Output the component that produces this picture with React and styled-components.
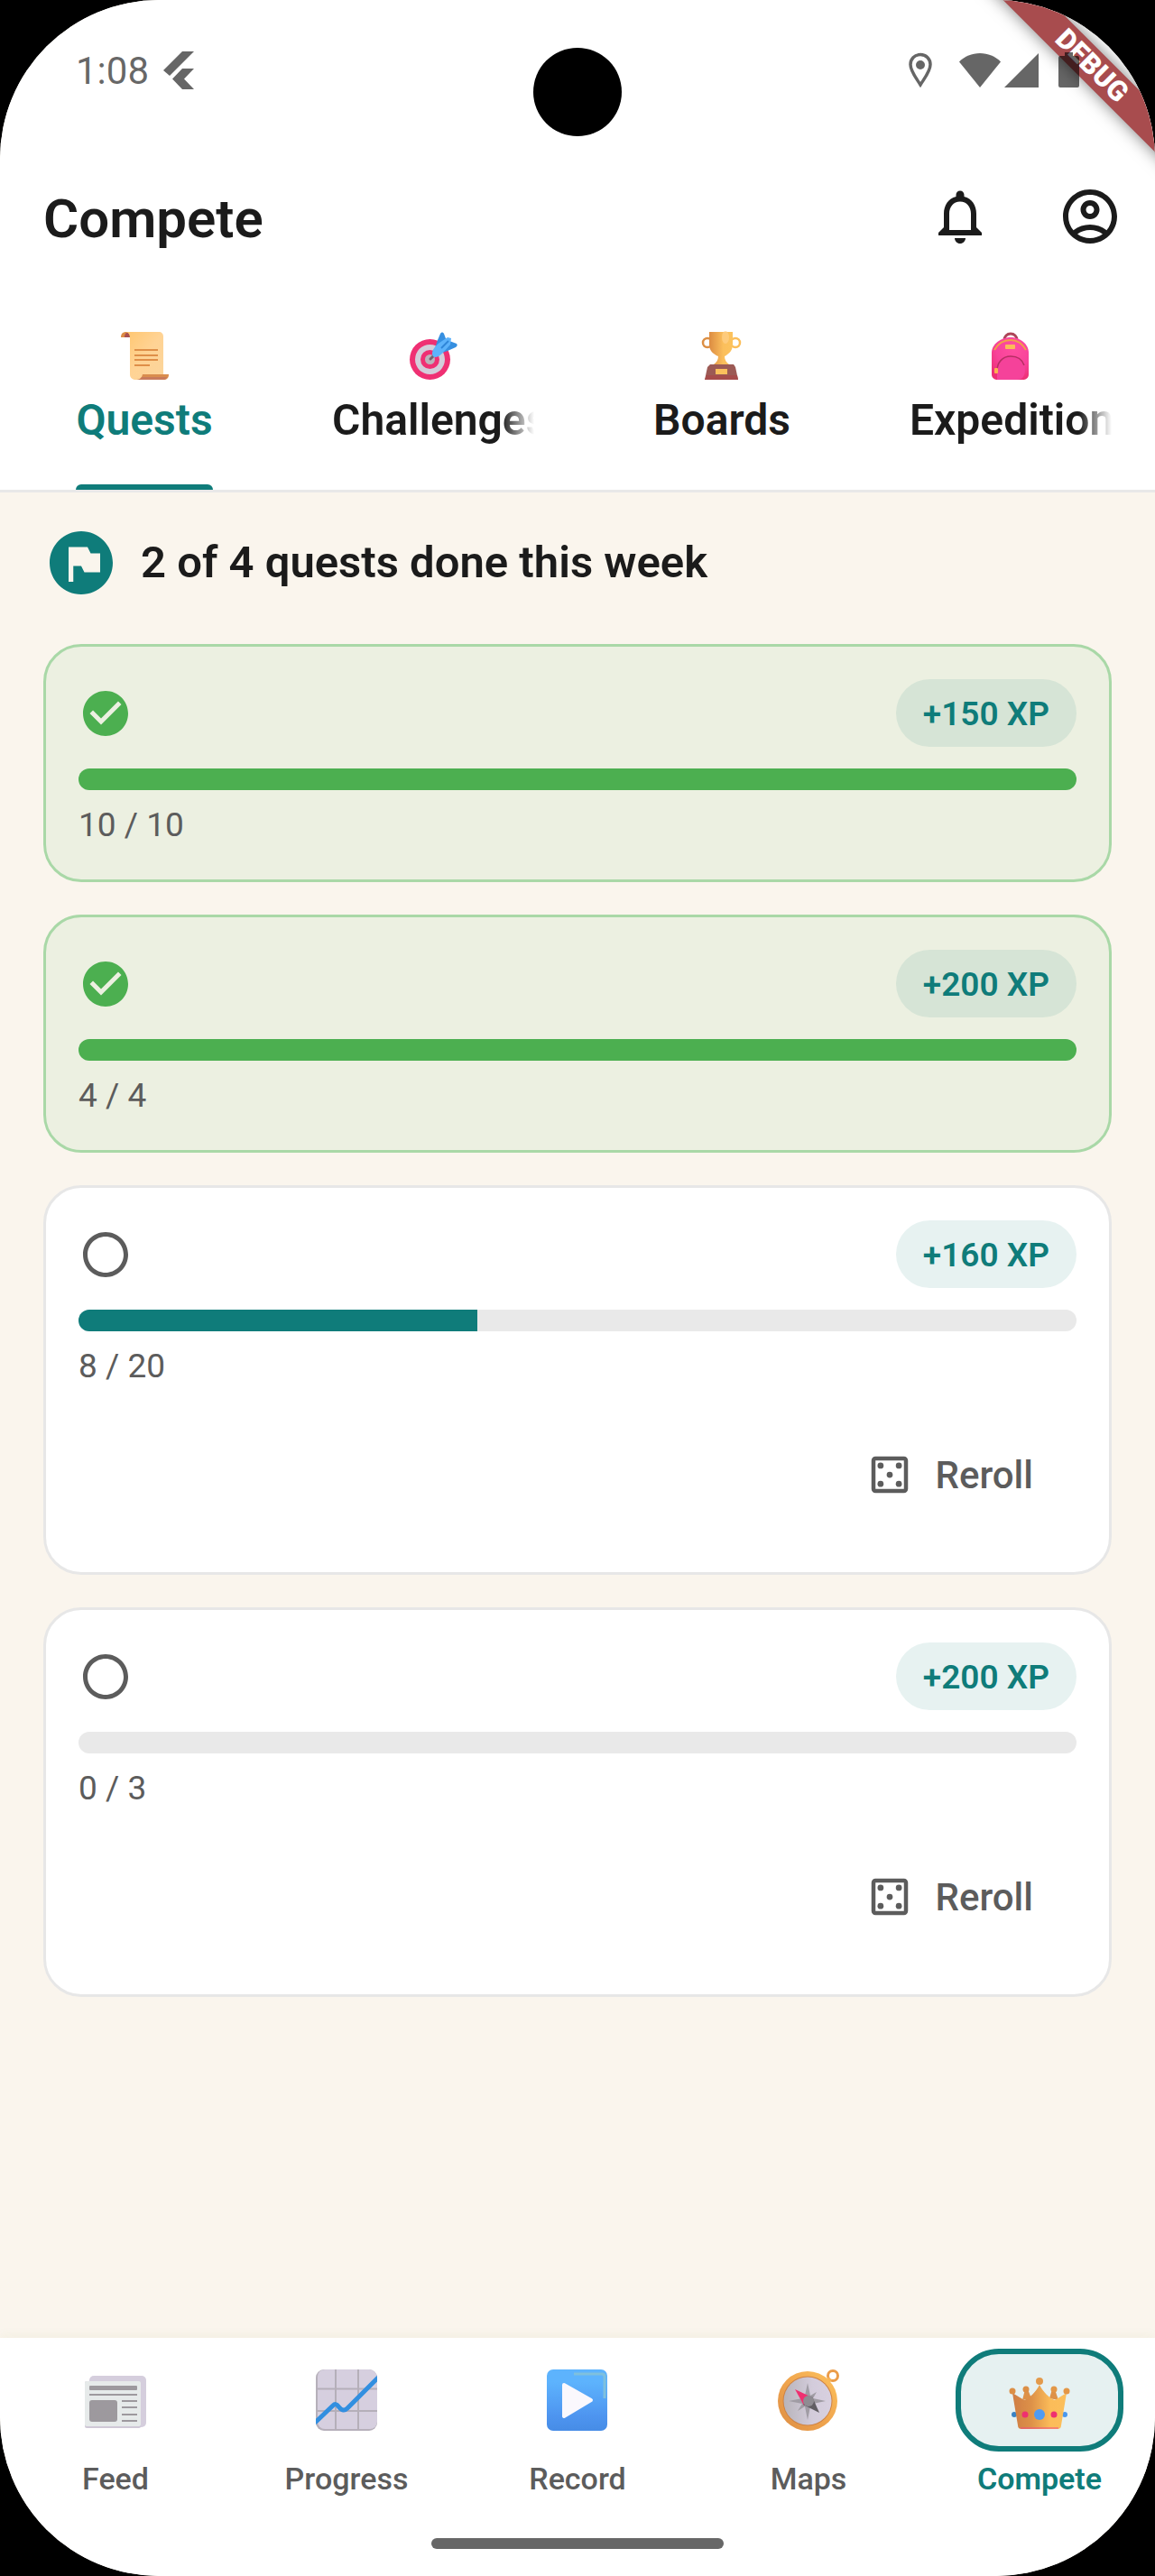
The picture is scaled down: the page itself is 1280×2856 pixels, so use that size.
import React from "react";
import styled, { createGlobalStyle, css } from "styled-components";
import {
  MdCheckCircle,
  MdFlagCircle,
  MdNotificationsNone,
  MdOutlineAccountCircle,
  MdOutlineCasino,
  MdOutlineCircle,
} from "react-icons/md";

const color = {
  teal: "#0f7c7a",
  tealSoft: "rgba(15, 124, 122, 0.1)",
  ink: "#1b1b1b",
  muted: "#5c5c5c",
  green: "#4caf50",
  cream: "#faf5ed",
  line: "#e8e8e8",
  system: "rgba(0, 0, 0, 0.6)",
};

const GlobalStyle = createGlobalStyle`
  *, *::before, *::after { box-sizing: border-box; }
  html, body { margin: 0; background: #000; }
  body { font-family: Roboto, "Noto Sans", sans-serif; color: ${color.ink}; }
  button { font: inherit; color: inherit; border: 0; padding: 0; background: none; cursor: pointer; }
  a { color: inherit; text-decoration: none; }
  h1, h2, p, ul { margin: 0; padding: 0; }
  svg { display: block; flex: none; }
`;

const Screen = styled.div`
  position: relative;
  display: flex;
  flex-direction: column;
  min-height: 100vh;
  overflow: hidden;
  border-radius: 176px;
  background: ${color.cream};
`;

/* ---------- system chrome ---------- */

const Camera = styled.div`
  position: absolute;
  z-index: 3;
  top: 53px;
  left: 50%;
  width: 98px;
  height: 98px;
  margin-left: -49px;
  border-radius: 50%;
  background: #000;
`;

const DebugBanner = styled.div`
  position: absolute;
  z-index: 1;
  top: 55px;
  right: -80px;
  width: 300px;
  height: 36px;
  transform: rotate(45deg);
  background: #a84c4e;
  box-shadow: 0 0 18px rgba(0, 0, 0, 0.5);
  color: #fff;
  font-size: 31px;
  line-height: 36px;
  font-weight: 900;
  text-align: center;
`;

const StatusBar = styled.div`
  position: relative;
  z-index: 2;
  display: flex;
  align-items: center;
  justify-content: space-between;
  height: 156px;
  padding: 0 84px;
  color: ${color.system};
  font-size: 42px;
`;

const StatusGroup = styled.div`
  display: flex;
  align-items: center;
  gap: ${(p) => p.$gap}px;
`;

/* ---------- header ---------- */

const Header = styled.header`
  background: #fff;
  border-bottom: 3px solid ${color.line};
`;

const AppBar = styled.div`
  display: flex;
  align-items: center;
  height: 168px;
  padding-left: 48px;
`;

const Title = styled.h1`
  flex: 1;
  padding-top: 6px;
  font-size: 60px;
  line-height: 72px;
  font-weight: 600;
`;

const IconButton = styled.button`
  display: grid;
  place-items: center;
  width: 144px;
  height: 144px;
  font-size: 72px;
`;

const Tabs = styled.div`
  display: grid;
  grid-template-columns: repeat(4, minmax(0, 1fr));
`;

const Tab = styled.button`
  display: flex;
  flex-direction: column;
  align-items: center;
  gap: 10px;
  height: 219px;
  padding: 43px 48px 0;
  color: ${(p) => (p.$active ? color.teal : color.ink)};
`;

const TabLabel = styled.span`
  display: flex;
  flex-direction: column;
  flex: 1;
  max-width: 100%;
  overflow: hidden;
  font-size: 48px;
  line-height: 70px;
  font-weight: 600;
  white-space: nowrap;
  ${(p) =>
    p.$fade &&
    css`
      mask-image: linear-gradient(to right, #000 calc(100% - 36px), transparent);
    `}
  ${(p) =>
    p.$active &&
    css`
      &::after {
        content: "";
        height: 6px;
        margin-top: auto;
        border-radius: 6px 6px 0 0;
        background: ${color.teal};
      }
    `}
`;

/* ---------- quests ---------- */

const Main = styled.main`
  flex: 1;
  padding: 36px 48px 48px;
`;

const Summary = styled.div`
  display: flex;
  align-items: center;
  gap: 24px;
  margin-bottom: 48px;

  svg {
    font-size: 84px;
    color: ${color.teal};
  }
`;

const SummaryText = styled.h2`
  font-size: 49px;
  line-height: 72px;
  font-weight: 600;
`;

const QuestList = styled.ul`
  display: flex;
  flex-direction: column;
  gap: 36px;
  list-style: none;
`;

const QuestCard = styled.li`
  display: flex;
  flex-direction: column;
  padding: 36px;
  border: 3px solid ${(p) => (p.$done ? "#a9d8a7" : "#e7e7e7")};
  border-radius: 42px;
  background: ${(p) => (p.$done ? "#ecf0e1" : "#fff")};
`;

const QuestTop = styled.div`
  display: flex;
  align-items: center;
  justify-content: space-between;
  font-size: 60px;
  color: ${(p) => (p.$done ? color.green : color.muted)};
`;

const XpPill = styled.span`
  padding: 13px 30px 11px;
  border-radius: 38px;
  background: ${color.tealSoft};
  color: ${color.teal};
  font-size: 37px;
  line-height: 51px;
  font-weight: 600;
`;

const Track = styled.div`
  height: 24px;
  margin: 24px 0 15px;
  overflow: hidden;
  border-radius: 12px;
  background: #e9e9e9;
`;

const Fill = styled.div`
  height: 100%;
  background: ${(p) => (p.$done ? color.green : color.teal)};
`;

const Count = styled.p`
  color: ${color.muted};
  font-size: 37px;
  line-height: 48px;
`;

const RerollButton = styled.button`
  display: flex;
  align-items: center;
  align-self: flex-end;
  gap: 24px;
  height: 144px;
  margin-top: 24px;
  padding: 0 48px 0 36px;
  color: ${color.muted};
  font-size: 42px;
  font-weight: 500;

  svg {
    font-size: 54px;
  }
`;

/* ---------- bottom navigation ---------- */

const BottomBar = styled.div`
  display: flex;
  flex-direction: column;
  align-items: center;
  padding-bottom: 30px;
  background: #fff;
  box-shadow: 0 -2px 12px rgba(120, 140, 40, 0.06);
`;

const Nav = styled.nav`
  display: grid;
  grid-template-columns: repeat(5, minmax(0, 1fr));
  width: 100%;
  padding: 12px 0 42px;
`;

const NavItem = styled.a`
  display: flex;
  flex-direction: column;
  align-items: center;
  gap: 6px;
  color: ${(p) => (p.$active ? color.teal : color.muted)};
  font-size: 34px;
  line-height: 48px;
  font-weight: ${(p) => (p.$active ? 600 : 500)};
`;

const NavIcon = styled.span`
  display: grid;
  place-items: center;
  width: 186px;
  height: 114px;
  border: 6px solid ${(p) => (p.$active ? color.teal : "transparent")};
  border-radius: 48px;
  background: ${(p) => (p.$active ? "#e6f1f1" : "transparent")};
`;

const GestureBar = styled.div`
  width: 324px;
  height: 12px;
  border-radius: 6px;
  background: #676767;
`;

/* ---------- drawings ---------- */

const FlutterMark = () => (
  <svg width="34" height="42" viewBox="0 0 34 42" fill="currentColor" aria-hidden="true">
    <path d="M21 0h13L7 27 0 21z" />
    <path d="M21 19h13L23 30.500 34 42H21L10 30.500z" />
  </svg>
);

const PinMark = () => (
  <svg width="42" height="40" viewBox="0 0 42 40" aria-hidden="true">
    <path
      d="M21 2.500c-6.500 0-11 4.800-11 11 0 7.500 6 14.500 11 22.500 5-8 11-15 11-22.500 0-6.200-4.500-11-11-11z"
      fill="none"
      stroke="currentColor"
      strokeWidth="3.500"
    />
    <circle cx="21" cy="14" r="5" fill="currentColor" />
  </svg>
);

const WifiMark = () => (
  <svg width="46" height="38" viewBox="0 0 46 38" fill="currentColor" aria-hidden="true">
    <path d="M0 9.500C6 3.500 14 0 23 0s17 3.500 23 9.500L23 38z" />
  </svg>
);

const SignalMark = () => (
  <svg width="38" height="38" viewBox="0 0 38 38" fill="currentColor" aria-hidden="true">
    <path d="M38 0v38H0z" />
  </svg>
);

const BatteryMark = () => (
  <svg width="23" height="40" viewBox="0 0 23 40" fill="currentColor" aria-hidden="true">
    <path d="M7 0h9v4h5a2 2 0 0 1 2 2v31a2 2 0 0 1-2 2H2a2 2 0 0 1-2-2V6a2 2 0 0 1 2-2h5z" />
  </svg>
);

const ScrollEmoji = () => (
  <svg width="54" height="54" viewBox="0 0 54 54" aria-hidden="true">
    <defs>
      <linearGradient id="paper" x1="0" y1="0" x2="1" y2="1">
        <stop offset="0" stopColor="#ffc670" />
        <stop offset=".5" stopColor="#ffd394" />
        <stop offset="1" stopColor="#fbd59c" />
      </linearGradient>
    </defs>
    <path d="M1 7c0-4 2-6 6-6h5v6z" fill="#dc8c46" />
    <path d="M5 7c0-3 1-5 3-5s3 2 3 5z" fill="#a94f4f" />
    <path d="M6 1h37c3 0 5 2 5 5v44l-6 4H18c-4 0-7-2-7-6V7c0-3-2-6-5-6z" fill="url(#paper)" />
    <path d="M25 48h29c0 4-2 6-6 6H18c4 0 6-2 7-6z" fill="#d98d4e" />
    <path d="M24 51h28c-1 2-2 3-4 3H18c3 0 5-1 6-3z" fill="#c97b5c" />
    <path d="M16 21h26M16 27h26M16 32h26M16 38h17" stroke="#df8f48" strokeWidth="2" />
  </svg>
);

const TargetEmoji = () => (
  <svg width="54" height="54" viewBox="0 0 54 54" aria-hidden="true">
    <circle cx="23.500" cy="31.500" r="22.500" fill="#ef3073" />
    <circle cx="23.500" cy="31.500" r="16.500" fill="#d3cdda" />
    <circle cx="23.500" cy="31.500" r="10.500" fill="#ef3073" />
    <circle cx="23.500" cy="31.500" r="5.500" fill="#b9b4bb" />
    <path d="M24 31l6-6" stroke="#75606c" strokeWidth="3" strokeLinecap="round" />
    <path d="M28 22l4-12 3-7c1-2 3-2 4 0l3 8-6 13z" fill="#368fe0" />
    <path d="M31 26l12-4 9-4c2-1 2-3 1-4l-8-3-9 4z" fill="#368fe0" />
    <path d="M26 25c0-4 3-8 8-12l9-6 4 1-1 7-8 9c-3 3-6 5-9 5-2 0-3-2-3-4z" fill="#5db3fb" />
    <path d="M36 19l8-8" stroke="#2f86d8" strokeWidth="2" />
  </svg>
);

const TrophyEmoji = () => (
  <svg width="54" height="54" viewBox="0 0 54 54" aria-hidden="true">
    <defs>
      <linearGradient id="cup" x1="0" x2="1">
        <stop offset="0" stopColor="#dc8c42" />
        <stop offset=".6" stopColor="#fbbf5c" />
        <stop offset="1" stopColor="#fcc35e" />
      </linearGradient>
    </defs>
    <circle cx="11" cy="13" r="5" fill="none" stroke="#dc8f44" strokeWidth="2.500" />
    <circle cx="42" cy="13" r="5" fill="none" stroke="#fbbe5a" strokeWidth="2.500" />
    <path d="M13 1h26v14c0 7-5 11-9 13 0 4 2 7 5 9H18c3-2 5-5 5-9-5-2-10-6-10-13z" fill="url(#cup)" />
    <ellipse cx="31" cy="7" rx="4" ry="7" fill="#ffd08a" opacity=".7" />
    <path d="M14 37h26l2 3 3 14H8l3-14z" fill="#9c5a55" />
    <path d="M10 49h34l1 5H8z" fill="#a64c4b" />
    <rect x="20" y="42" width="13" height="6" fill="#fbbf5c" />
  </svg>
);

const BackpackEmoji = () => (
  <svg width="54" height="54" viewBox="0 0 54 54" aria-hidden="true">
    <defs>
      <radialGradient id="bag" cx=".6" cy=".25" r=".8">
        <stop offset="0" stopColor="#ff4fa0" />
        <stop offset=".6" stopColor="#f8429a" />
        <stop offset="1" stopColor="#ec3074" />
      </radialGradient>
    </defs>
    <path d="M20 10c0-4 3-7 7-7s7 3 7 7" fill="none" stroke="#ad4558" strokeWidth="3" />
    <path d="M6 24C6 14 17 7 27 7s20 7 20 17v24c0 4-3 6-7 6H13c-4 0-7-2-7-6z" fill="url(#bag)" />
    <path d="M9 21c4-7 10-11 18-11s13 4 17 11" fill="none" stroke="#f2a048" strokeWidth="2" />
    <rect x="21" y="15" width="11" height="5" rx="1" fill="#fbbb58" />
    <path d="M12 54V42c0-8 6-14 15-14s16 6 16 14c0 8-3 12-9 12z" fill="#f5429a" />
    <path d="M12 44c0-9 6-16 15-16s13 4 15 10" fill="none" stroke="#b52f62" strokeWidth="1.500" />
    <rect x="9" y="41" width="4" height="6" rx="1" fill="#fbb050" />
  </svg>
);

const FeedEmoji = () => (
  <svg width="68" height="68" viewBox="0 0 68 68" aria-hidden="true">
    <rect x="5" y="7" width="63" height="57" rx="5" fill="#d5cedd" />
    <rect x="0" y="13" width="62" height="52" rx="2" fill="#cfc8d6" />
    <rect x="0" y="13" width="62" height="50" rx="2" fill="#e6eaea" />
    <rect x="5" y="18" width="53" height="5" rx="1" fill="#9d999e" />
    <rect x="5" y="27" width="53" height="2" fill="#9d999e" />
    <rect x="5" y="34" width="31" height="24" rx="3" fill="#9d999e" />
    <path d="M41 35h17M41 42h17M41 50h17M41 57h17" stroke="#9d999e" strokeWidth="2" />
  </svg>
);

const ChartEmoji = () => (
  <svg width="68" height="68" viewBox="0 0 68 68" aria-hidden="true">
    <defs>
      <clipPath id="tile">
        <rect width="68" height="68" rx="9" />
      </clipPath>
    </defs>
    <g clipPath="url(#tile)">
      <rect width="68" height="68" fill="#b6b0ba" />
      <rect x="2" y="0" width="66" height="66" rx="8" fill="#d6cfdf" />
      <path d="M22 0v68M47 0v68M0 21.500h68M0 46h68" stroke="#b5afb9" strokeWidth="2" />
      <path d="M-2 60l21-20c2-2 4-2 6 1 4 5 7 5 10 2L70 8" fill="none" stroke="#328fe0" strokeWidth="5" />
    </g>
  </svg>
);

const RecordEmoji = () => (
  <svg width="68" height="68" viewBox="0 0 68 68" aria-hidden="true">
    <defs>
      <linearGradient id="play" x1="0" y1="0" x2="0" y2="1">
        <stop offset=".2" stopColor="#5db3fd" />
        <stop offset=".75" stopColor="#4e95f0" />
        <stop offset="1" stopColor="#468ce6" />
      </linearGradient>
    </defs>
    <rect width="67" height="68" rx="7" fill="url(#play)" />
    <path d="M30 5h31c2 0 3 1 3 3v24" fill="none" stroke="#7fc0dd" strokeWidth="3" />
    <path d="M19 17l30 17-30 18z" fill="#faf8fd" stroke="#faf8fd" strokeWidth="4" strokeLinejoin="round" />
  </svg>
);

const CompassEmoji = () => (
  <svg width="68" height="68" viewBox="0 0 68 68" aria-hidden="true">
    <defs>
      <linearGradient id="brass" x1="1" y1="0" x2="0" y2="1">
        <stop offset="0" stopColor="#fdc35e" />
        <stop offset=".5" stopColor="#f0a54e" />
        <stop offset="1" stopColor="#dc8d44" />
      </linearGradient>
      <linearGradient id="dial" x1="0" x2="1">
        <stop offset="0" stopColor="#b8b4bb" />
        <stop offset=".6" stopColor="#d3ccdb" />
        <stop offset="1" stopColor="#d8d0e0" />
      </linearGradient>
    </defs>
    <circle cx="61" cy="7" r="5.500" fill="none" stroke="#eb9c49" strokeWidth="3" />
    <path d="M53 16l5-6" stroke="#f7b354" strokeWidth="5" />
    <circle cx="33" cy="35" r="33" fill="url(#brass)" />
    <circle cx="33" cy="35" r="27.500" fill="#cf8242" />
    <circle cx="33" cy="35" r="26.500" fill="url(#dial)" />
    <path
      d="M33 15l3 14 7-4-4 7 14 3-14 3 4 7-7-4-3 15-3-15-8 5 5-8-15-3 15-3-4-7 7 4z"
      fill="#a09ca4"
    />
    <path d="M19 22l19 9-9 9z" fill="#ef3070" />
    <path d="M46 48l-18-9 10-9z" fill="#615e63" />
    <circle cx="34" cy="35" r="6" fill="#8f8c92" />
  </svg>
);

const CrownEmoji = () => (
  <svg width="68" height="68" viewBox="0 0 68 68" aria-hidden="true">
    <defs>
      <linearGradient id="gold" x1="0" x2="1">
        <stop offset="0" stopColor="#cf7d45" />
        <stop offset=".35" stopColor="#dd9148" />
        <stop offset=".7" stopColor="#fbbc59" />
        <stop offset="1" stopColor="#fcbf5b" />
      </linearGradient>
    </defs>
    <circle cx="6" cy="50" r="3" fill="#3a83c4" />
    <circle cx="62" cy="50" r="3" fill="#4a98ee" />
    <path d="M15 34l3-12h3l4 10zM45 32l3-10h3l4 12z" fill="#dd9148" />
    <path d="M4 26l13 8c6-2 13-9 17-17 4 8 11 15 17 17l13-8-6 36c0 3-2 4-4 4H14c-2 0-4-1-4-4z" fill="url(#gold)" />
    <path d="M13 65h42" stroke="#ef4a82" strokeWidth="1" />
    <circle cx="34" cy="13" r="4" fill="#e39a4b" />
    <circle cx="19" cy="22" r="3.500" fill="#dc8f46" />
    <circle cx="50" cy="22" r="3.500" fill="#e39747" />
    <circle cx="4" cy="24" r="3.500" fill="#dc8f46" />
    <circle cx="64" cy="24" r="3.500" fill="#e39747" />
    <circle cx="34" cy="50" r="6" fill="#4f9bf3" />
    <circle cx="18" cy="50" r="3.500" fill="#ef3070" />
    <circle cx="50" cy="50" r="3.500" fill="#ef3070" />
  </svg>
);

/* ---------- data ---------- */

const tabs = [
  { label: "Quests", Icon: ScrollEmoji, active: true },
  { label: "Challenges", Icon: TargetEmoji, fade: true },
  { label: "Boards", Icon: TrophyEmoji },
  { label: "Expeditions", Icon: BackpackEmoji, fade: true },
];

const quests = [
  { id: 1, value: 10, goal: 10, xp: 150 },
  { id: 2, value: 4, goal: 4, xp: 200 },
  { id: 3, value: 8, goal: 20, xp: 160 },
  { id: 4, value: 0, goal: 3, xp: 200 },
];

const navItems = [
  { label: "Feed", Icon: FeedEmoji },
  { label: "Progress", Icon: ChartEmoji },
  { label: "Record", Icon: RecordEmoji },
  { label: "Maps", Icon: CompassEmoji },
  { label: "Compete", Icon: CrownEmoji, active: true },
];

function Quest({ value, goal, xp }) {
  const done = value >= goal;
  return (
    <QuestCard $done={done}>
      <QuestTop $done={done}>
        {done ? <MdCheckCircle /> : <MdOutlineCircle />}
        <XpPill>+{xp} XP</XpPill>
      </QuestTop>
      <Track
        role="progressbar"
        aria-label="Quest progress"
        aria-valuenow={value}
        aria-valuemin={0}
        aria-valuemax={goal}
      >
        <Fill $done={done} style={{ width: `${(value / goal) * 100}%` }} />
      </Track>
      <Count>
        {value} / {goal}
      </Count>
      {!done && (
        <RerollButton type="button">
          <MdOutlineCasino />
          Reroll
        </RerollButton>
      )}
    </QuestCard>
  );
}

export default function App() {
  const doneCount = quests.filter((q) => q.value >= q.goal).length;
  return (
    <>
      <GlobalStyle />
      <Screen>
        <Camera />
        <DebugBanner>DEBUG</DebugBanner>
        <Header>
          <StatusBar>
            <StatusGroup $gap={16}>
              <span>1:08</span>
              <FlutterMark />
            </StatusGroup>
            <StatusGroup $gap={22}>
              <PinMark />
              <StatusGroup $gap={4}>
                <WifiMark />
                <SignalMark />
              </StatusGroup>
              <BatteryMark />
            </StatusGroup>
          </StatusBar>
          <AppBar>
            <Title>Compete</Title>
            <IconButton type="button" aria-label="Notifications">
              <MdNotificationsNone />
            </IconButton>
            <IconButton type="button" aria-label="Account">
              <MdOutlineAccountCircle />
            </IconButton>
          </AppBar>
          <Tabs role="tablist">
            {tabs.map(({ label, Icon, active, fade }) => (
              <Tab key={label} type="button" role="tab" aria-selected={!!active} $active={active}>
                <Icon />
                <TabLabel $active={active} $fade={fade}>
                  {label}
                </TabLabel>
              </Tab>
            ))}
          </Tabs>
        </Header>
        <Main>
          <Summary>
            <MdFlagCircle />
            <SummaryText>
              {doneCount} of {quests.length} quests done this week
            </SummaryText>
          </Summary>
          <QuestList>
            {quests.map((q) => (
              <Quest key={q.id} {...q} />
            ))}
          </QuestList>
        </Main>
        <BottomBar>
          <Nav>
            {navItems.map(({ label, Icon, active }) => (
              <NavItem key={label} href={`#${label.toLowerCase()}`} $active={active}>
                <NavIcon $active={active}>
                  <Icon />
                </NavIcon>
                {label}
              </NavItem>
            ))}
          </Nav>
          <GestureBar />
        </BottomBar>
      </Screen>
    </>
  );
}
